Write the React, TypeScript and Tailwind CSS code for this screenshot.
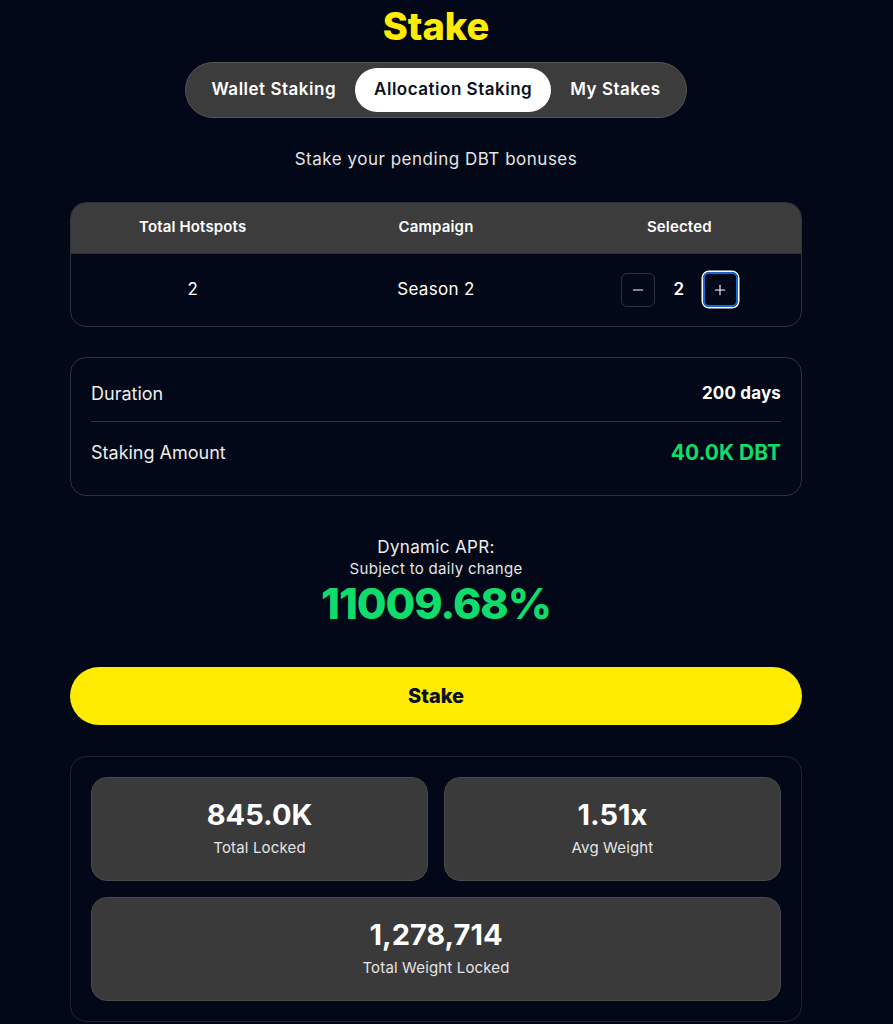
import { Minus, Plus } from "lucide-react";

const font = { fontFamily: "Inter, 'Noto Sans', sans-serif" };

function StatBox({ value, label }: { value: string; label: string }) {
  return (
    <div className="flex h-[104px] flex-col items-center justify-center rounded-2xl border border-[#4a4a4a] bg-[#3a3a3a]">
      <div className="text-[29px] font-bold leading-9 text-white">{value}</div>
      <div className="mt-1 text-[15px] tracking-[0.01em] text-[#e5e5e5]">{label}</div>
    </div>
  );
}

export default function App() {
  return (
    <div className="min-h-screen bg-[#020817] text-white" style={font}>
      <div className="ml-[70px] flex w-[732px] flex-col items-center pb-2">
        <h1 className="mt-1 text-[38px] font-extrabold leading-[44px] text-[#ffec00]">Stake</h1>

        {/* tabs */}
        <div className="mt-[14px] flex h-[56px] items-center rounded-full border border-[#555] bg-[#3c3c3c] px-[6px]">
          <button className="h-[44px] px-[19px] text-[17px] font-semibold tracking-[0.03em] text-white">Wallet Staking</button>
          <button className="h-[44px] rounded-full bg-white px-[19px] text-[17px] font-semibold tracking-[0.03em] text-[#0b1020]">
            Allocation Staking
          </button>
          <button className="h-[44px] px-[19px] text-[17px] font-semibold tracking-[0.03em] text-white">My Stakes</button>
        </div>

        <p className="mt-[29px] text-[17px] tracking-[0.03em] text-[#e5e5e5]">Stake your pending DBT bonuses</p>

        {/* table */}
        <div className="mt-[29px] w-full overflow-hidden rounded-2xl border border-[#2c3340]">
          <div className="grid h-[50px] grid-cols-3 items-center bg-[#3c3c3c] text-center text-[15px] font-semibold tracking-[0.01em]">
            <div>Total Hotspots</div>
            <div>Campaign</div>
            <div>Selected</div>
          </div>
          <div className="grid h-[73px] grid-cols-3 items-center border-t border-[#2c3340] text-center text-[17px]">
            <div>2</div>
            <div className="tracking-[0.02em]">Season 2</div>
            <div className="flex items-center justify-center gap-[16px]">
              <button className="flex h-[34px] w-[34px] items-center justify-center rounded-md border border-[#2c3340] text-white">
                <Minus size={16} strokeWidth={1.6} />
              </button>
              <span className="w-[16px] text-[17px] font-semibold">2</span>
              <button className="flex h-[35px] w-[35px] items-center justify-center rounded-md border-2 border-[#1667d4] text-white ring-[1.5px] ring-white">
                <Plus size={16} strokeWidth={1.6} />
              </button>
            </div>
          </div>
        </div>

        {/* details */}
        <div className="mt-[30px] w-full rounded-2xl border border-[#2c3340] px-5">
          <div className="flex h-[64px] items-center justify-between border-b border-[#2c3340] pt-[9px]">
            <span className="text-[18px] text-[#ededed]">Duration</span>
            <span className="text-[17px] font-bold tracking-[0.01em]">200 days</span>
          </div>
          <div className="flex h-[73px] items-center justify-between pb-[11px]">
            <span className="text-[18px] text-[#ededed]">Staking Amount</span>
            <span className="text-[21px] font-bold text-[#10dc6c]">40.0K DBT</span>
          </div>
        </div>

        {/* apr */}
        <div className="mt-[39px] flex flex-col items-center">
          <div className="text-[17px] leading-6 tracking-[0.02em] text-[#ededed]">Dynamic APR:</div>
          <div className="text-[15px] leading-5 tracking-[0.02em] text-[#e5e5e5]">Subject to daily change</div>
          <div className="text-[43px] font-extrabold leading-[48px] tracking-tight text-[#10dc6c]">11009.68%</div>
        </div>

        <button className="mt-[40px] h-[58px] w-full rounded-full bg-[#ffec00] text-[20px] font-extrabold text-[#0b1020]">
          Stake
        </button>

        {/* stats */}
        <div className="mt-[31px] w-full rounded-2xl border border-[#1f2532] p-5">
          <div className="grid grid-cols-2 gap-4">
            <StatBox value="845.0K" label="Total Locked" />
            <StatBox value="1.51x" label="Avg Weight" />
            <div className="col-span-2">
              <StatBox value="1,278,714" label="Total Weight Locked" />
            </div>
          </div>
        </div>
      </div>
    </div>
  );
}
